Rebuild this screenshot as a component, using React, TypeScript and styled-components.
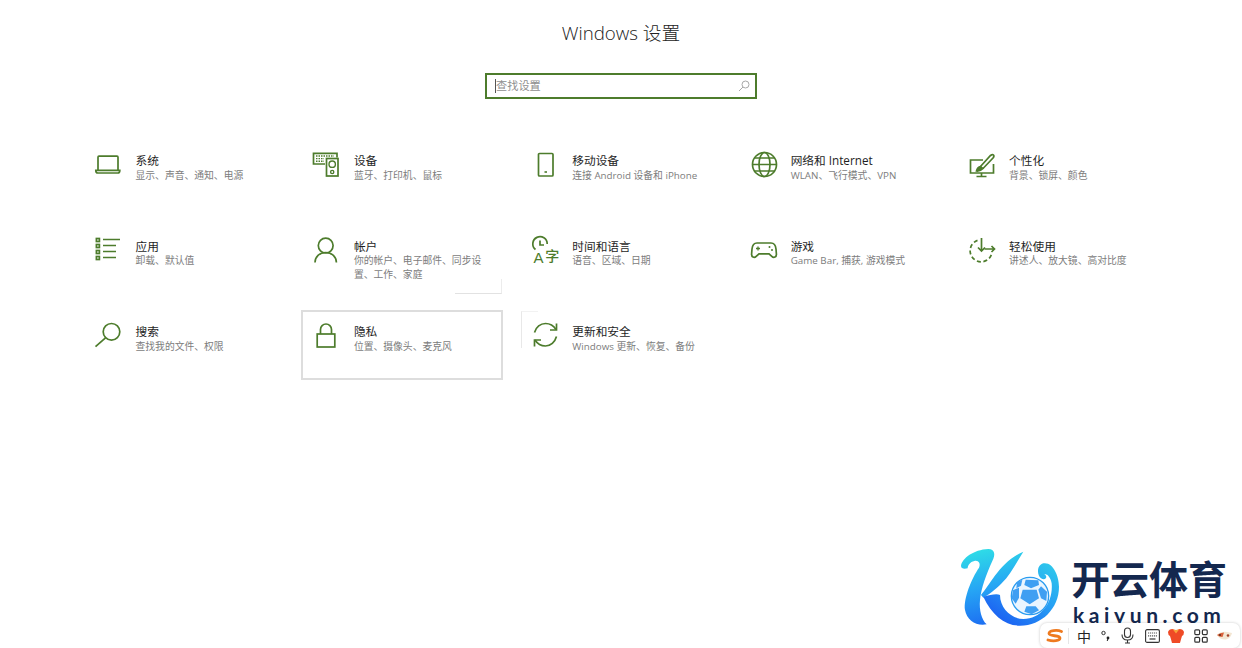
import React from "react";
import styled, { createGlobalStyle } from "styled-components";

const GREEN = "#4d7c2c";
const FONT = `"Open Sans", "Noto Sans CJK SC", "Noto Sans", sans-serif`;

const Global = createGlobalStyle`
  html, body { margin: 0; padding: 0; background: #fff; }
  body { font-family: ${FONT}; overflow: hidden; }
`;

const Page = styled.div`
  position: relative;
  width: 1242px;
  height: 648px;
  overflow: hidden;
  background: #fff;
  padding-top: 19px;
  box-sizing: border-box;
`;

const Title = styled.h1`
  margin: 0;
  height: 28px;
  line-height: 28px;
  text-align: center;
  font-size: 18.7px;
  font-weight: 300;
  color: #222;
`;

const SearchBox = styled.div`
  box-sizing: border-box;
  width: 272px;
  height: 26px;
  margin: 26px 0 0 485px;
  border: 2px solid ${GREEN};
  display: flex;
  align-items: center;
  justify-content: space-between;
  padding: 0 5px 0 8px;
`;

const Caret = styled.span`
  display: inline-block;
  width: 1px;
  height: 14px;
  background: #555;
`;

const Placeholder = styled.span`
  flex: 1;
  display: flex;
  align-items: center;
  font-size: 11.2px;
  line-height: 14px;
  color: #8f8f8f;
`;

const Grid = styled.div`
  display: grid;
  grid-template-columns: repeat(5, 200px);
  grid-auto-rows: 68px;
  column-gap: 18.4px;
  row-gap: 17.5px;
  margin: 41px 0 0 84px;
`;

const Tile = styled.div<{ $selected?: boolean; $hint?: "account" | "update" }>`
  position: relative;
  box-sizing: border-box;
  display: flex;
  gap: 13.5px;
  padding: 11px 10px;
  ${(p) =>
    p.$selected
      ? `
    margin: -1px;
    padding: 10px 9px;
    border: 2px solid #dddddd;
  `
      : ""}
  ${(p) =>
    p.$hint === "account"
      ? `&::after {
          content: "";
          position: absolute;
          right: 0;
          bottom: 0;
          width: 46px;
          height: 14px;
          border-right: 1px solid #ececec;
          border-bottom: 1px solid #e2e2e2;
        }`
      : ""}
  ${(p) =>
    p.$hint === "update"
      ? `&::after {
          content: "";
          position: absolute;
          left: 0;
          top: 0;
          width: 16px;
          height: 36px;
          border-left: 1px solid #e8e8e8;
          border-top: 1px solid #f2f2f2;
        }`
      : ""}
`;

const IconSlot = styled.div`
  flex: 0 0 28px;
  width: 28px;
  height: 28px;
  color: ${GREEN};
  svg { display: block; overflow: visible; }
`;

const TileText = styled.div`
  flex: 1;
  margin-top: 1px;
  min-width: 0;
`;

const TileTitle = styled.div`
  font-size: 11.7px;
  line-height: 16px;
  color: #1e1e1e;
`;

const TileDesc = styled.div`
  font-size: 9.8px;
  line-height: 13.5px;
  color: #7c7c7c;
  margin-top: 0.5px;
`;

const Logo = styled.div`
  position: absolute;
  left: 955px;
  top: 545px;
  width: 280px;
  height: 85px;
  display: flex;
  gap: 6px;
`;

const LogoWords = styled.div`
  display: flex;
  flex-direction: column;
  width: 158px;
`;

const LogoCn = styled.div`
  margin-top: 12.5px;
  font-family: "Noto Sans CJK SC", sans-serif;
  font-size: 39px;
  line-height: 38px;
  font-weight: 700;
  color: #14284f;
  white-space: nowrap;
`;

const LogoEn = styled.div`
  margin-top: 7px;
  padding-left: 2px;
  font-family: "Lato", sans-serif;
  font-size: 21px;
  line-height: 24px;
  font-weight: 700;
  letter-spacing: 4.6px;
  color: #14284f;
  white-space: nowrap;
`;

const ImeBar = styled.div`
  position: absolute;
  left: 1040px;
  top: 623px;
  box-sizing: border-box;
  width: 200px;
  height: 25px;
  padding-left: 3px;
  background: #fff;
  border-radius: 7px;
  box-shadow: 0 0 3px rgba(0, 0, 0, 0.22);
  display: grid;
  grid-template-columns: 24px 5px 24px 20px 22px 28px 20px 30px 16px;
  align-items: center;
  justify-items: center;
`;

const ImeSep = styled.span`
  width: 1px;
  height: 16px;
  background: #e6e6e6;
  margin-right: 2px;
`;

const ImeChar = styled.span`
  font-family: "Noto Sans CJK SC", sans-serif;
  font-size: 14px;
  line-height: 16px;
  color: #222;
`;

const s = { fill: "none", stroke: "currentColor", strokeWidth: 1.7 } as const;
const Svg = ({ children }: { children: React.ReactNode }) => (
  <svg width="28" height="28" viewBox="0 0 28 28">{children}</svg>
);

const Laptop = () => (
  <Svg>
    <path {...s} d="M4 19V6.2q0-1 1-1h18q1 0 1 1V19" />
    <path {...s} d="M1.800 19.400h24q0 2.600-2 2.600H3.800q-2 0-2-2.600z" />
  </Svg>
);
const Devices = () => (
  <Svg>
    <path {...s} d="M13 13H1.500V2.400h23.500V6.500" />
    <path stroke="currentColor" strokeWidth="1.400" strokeDasharray="1.500 1" fill="none" d="M4 5h18M4 7.600h8M4 10.200h8" />
    <rect {...s} x="14.500" y="7.500" width="11.500" height="17.500" />
    <circle {...s} strokeWidth="1.400" cx="20.200" cy="13.200" r="3.200" />
    <circle {...s} strokeWidth="1.400" cx="20.200" cy="21" r="1.600" />
  </Svg>
);
const Phone = () => (
  <Svg>
    <rect {...s} x="7.500" y="2.500" width="14.500" height="22.500" rx="1" />
    <path stroke="currentColor" strokeWidth="1.600" d="M13.500 21h2.500" />
  </Svg>
);
const Globe = () => (
  <Svg>
    <circle {...s} cx="15.500" cy="13.500" r="12" />
    <ellipse {...s} cx="15.500" cy="13.500" rx="5.500" ry="12" />
    <path {...s} d="M3.500 13.500h24M5.500 7h20M5.500 20h20" />
  </Svg>
);
const Brush = () => (
  <Svg>
    <path {...s} d="M15 9H2.500v13h23V13" />
    <path {...s} d="M13.500 22v3.200M8.500 25.500h10" />
    <path {...s} d="M12.500 15.500L22.500 4.500q2-1.500 3-.5t-.5 3L15 17.500" />
    <path {...s} fill="currentColor" d="M12.500 15.500q-3 .2-4 4.500q4 .3 6.500-2.500z" />
  </Svg>
);
const Apps = () => (
  <Svg>
    <rect {...s} x="2.400" y="1.500" width="3" height="3" />
    <rect {...s} x="2.400" y="7.500" width="3" height="3" />
    <rect {...s} x="2.400" y="13.500" width="3" height="3" />
    <rect {...s} x="2.400" y="19.500" width="3" height="3" />
    <path {...s} d="M9 2.500h17M9 8.500h13M9 14.500h13M9 20.500h13" />
  </Svg>
);
const Person = () => (
  <Svg>
    <circle {...s} cx="13.700" cy="8.600" r="7.400" />
    <path {...s} d="M3 25.500c0-5.500 4.500-10 10.700-10s10.700 4.500 10.700 10" />
  </Svg>
);
const TimeLang = () => (
  <Svg>
    <path {...s} d="M4.500 12.500A7.200 7.200 0 1 1 16.200 7" />
    <path {...s} d="M9 3.500V8h4" />
    <text x="2.500" y="25.500" fontSize="15" fontFamily='"Liberation Sans", sans-serif' fill="currentColor">A</text>
    <text x="14.300" y="24" fontSize="14" fontWeight="500" fontFamily='"Noto Sans CJK SC", sans-serif' fill="currentColor">字</text>
  </Svg>
);
const Game = () => (
  <Svg>
    <path {...s} d="M8 6h14c3 0 4.600 2 5 6l.4 5c.2 3-2.600 4.400-4.600 2.400L20 16.800H10l-2.800 2.600c-2 2-4.800.6-4.600-2.400l.4-5C3.400 8 5 6 8 6z" />
    <path stroke="currentColor" strokeWidth="1.300" d="M7 11.500h4M9 9.500v4" />
    <circle cx="20.500" cy="10" r="1" fill="currentColor" />
    <circle cx="23" cy="13" r="1" fill="currentColor" />
  </Svg>
);
const Ease = () => (
  <Svg>
    <path {...s} strokeDasharray="4 2.600" d="M9.500 3.400A11 11 0 1 0 24 15.500" />
    <path {...s} d="M13.500 1v13M10 10.500l3.500 3.500 3.500-3.500" />
    <path {...s} d="M16.500 12h10M23.500 9l3 3-3 3" />
  </Svg>
);
const Search = () => (
  <Svg>
    <circle {...s} cx="17.500" cy="9.800" r="8.300" />
    <path {...s} d="M11.500 15.800L1.500 24.600" />
  </Svg>
);
const Lock = () => (
  <Svg>
    <rect {...s} x="5.200" y="12" width="17.600" height="13" />
    <path {...s} d="M8.500 12V7.500a5.500 5.500 0 0 1 11 0V12" />
  </Svg>
);
const Refresh = () => (
  <Svg>
    <path {...s} d="M3.500 10.500C5 5 9.500 1.500 14.500 1.500c4.500 0 8 2 10.500 6" />
    <path {...s} d="M25.500 1.500v6.500h-6.500" />
    <path {...s} d="M25.500 14.500C24 20 19.500 24 14.500 24c-4.500 0-8-2-10.500-6" />
    <path {...s} d="M3.500 24.500V18h6.500" />
  </Svg>
);

const tiles: {
  title: string;
  desc: string;
  Icon: () => React.ReactElement;
  selected?: boolean;
  hint?: "account" | "update";
}[] = [
  { title: "系统", desc: "显示、声音、通知、电源", Icon: Laptop },
  { title: "设备", desc: "蓝牙、打印机、鼠标", Icon: Devices },
  { title: "移动设备", desc: "连接 Android 设备和 iPhone", Icon: Phone },
  { title: "网络和 Internet", desc: "WLAN、飞行模式、VPN", Icon: Globe },
  { title: "个性化", desc: "背景、锁屏、颜色", Icon: Brush },
  { title: "应用", desc: "卸载、默认值", Icon: Apps },
  { title: "帐户", desc: "你的帐户、电子邮件、同步设置、工作、家庭", Icon: Person, hint: "account" },
  { title: "时间和语言", desc: "语音、区域、日期", Icon: TimeLang },
  { title: "游戏", desc: "Game Bar, 捕获, 游戏模式", Icon: Game },
  { title: "轻松使用", desc: "讲述人、放大镜、高对比度", Icon: Ease },
  { title: "搜索", desc: "查找我的文件、权限", Icon: Search },
  { title: "隐私", desc: "位置、摄像头、麦克风", Icon: Lock, selected: true },
  { title: "更新和安全", desc: "Windows 更新、恢复、备份", Icon: Refresh, hint: "update" },
];

const patches = [
  "203,134 245,134 252,160 224,178 196,160",
  "212,104 250,106 252,120 228,130 208,120",
  "258,124 276,140 274,168 258,160 250,134",
  "174,136 192,128 192,158 182,176 170,160",
  "214,184 242,184 252,196 230,208 208,200",
  "186,112 202,104 198,122 184,130",
];

const LogoMark = () => (
  <svg width="110" height="85" viewBox="0 0 330 255" style={{ flex: "0 0 110px" }}>
    <defs>
      <linearGradient id="kg2" gradientUnits="userSpaceOnUse" x1="60" y1="10" x2="110" y2="245">
        <stop offset="0" stopColor="#2fdfe6" />
        <stop offset="0.5" stopColor="#26a6f4" />
        <stop offset="1" stopColor="#1c6af2" />
      </linearGradient>
      <linearGradient id="kg3" gradientUnits="userSpaceOnUse" x1="300" y1="40" x2="160" y2="245">
        <stop offset="0" stopColor="#2fcfea" />
        <stop offset="0.5" stopColor="#26a0f4" />
        <stop offset="1" stopColor="#1c62f2" />
      </linearGradient>
    </defs>
    <path
      fill="url(#kg2)"
      d="M18 62C22 40 55 14 100 12C120 12 122 30 112 48C95 85 78 130 75 165C72 195 80 225 95 238C65 245 35 225 30 195C25 160 50 100 72 68C78 55 70 45 58 48C45 50 38 62 38 70C28 72 18 72 18 62Z"
    />
    <path fill="url(#kg2)" d="M78 150C105 120 135 50 205 20C180 60 165 90 140 115C120 135 100 150 85 158Z" />
    <path
      fill="url(#kg3)"
      d="M85 155C105 150 125 145 135 150C135 190 170 222 205 222C260 222 295 170 290 115C287 95 275 85 268 88C280 95 272 108 258 100C245 90 245 60 265 55C295 50 312 95 312 125C312 190 260 242 195 242C150 242 110 210 85 155Z"
    />
    <circle cx="225" cy="153" r="56" fill="#eaf5ff" stroke="#2a9cf0" strokeWidth="4" />
    {patches.map((p) => (
      <polygon key={p} points={p} fill="#3f9ff2" />
    ))}
  </svg>
);

const SogouS = () => (
  <svg width="18" height="14" viewBox="0 0 18 14">
    <path
      d="M15.500 2.500C11 .5 3 1.500 3 4.500s11 1.500 11 4.500-7 3.500-12 2"
      fill="none"
      stroke="#ee7a1f"
      strokeWidth="2.800"
      strokeLinecap="round"
    />
  </svg>
);
const ImeDots = () => (
  <svg width="10" height="14" viewBox="0 0 10 14">
    <circle cx="2.500" cy="4" r="1.700" fill="none" stroke="#333" strokeWidth="1" />
    <circle cx="7" cy="9" r="1.400" fill="#222" />
    <path d="M7 9.500l-.8 2.500" stroke="#222" strokeWidth="1" />
  </svg>
);
const ImeMic = () => (
  <svg width="13" height="17" viewBox="0 0 13 17">
    <rect x="3.500" y="1" width="6" height="9.500" rx="3" fill="none" stroke="#333" strokeWidth="1.100" />
    <path d="M1 7.500c0 4 2.500 5.500 5.500 5.500S12 11.500 12 7.500M6.500 13v3M4 16h5" fill="none" stroke="#333" strokeWidth="1.100" />
  </svg>
);
const ImeKeys = () => (
  <svg width="15" height="14" viewBox="0 0 15 14">
    <rect x=".6" y=".6" width="13.800" height="12.800" rx="1.500" fill="none" stroke="#333" strokeWidth="1.100" />
    <path d="M3 4h9M3 6.800h9" stroke="#555" strokeWidth="1.200" strokeDasharray="1.200 .8" />
    <path d="M4.500 10h6" stroke="#333" strokeWidth="1.200" />
  </svg>
);
const ImeShirt = () => (
  <svg width="16" height="14" viewBox="0 0 16 14">
    <path d="M0 3Q1 0 4.500 0 8 2 11.500 0 15 0 16 3 16 6 14 7 13 10 12 14H4Q3 10 2 7 0 6 0 3z" fill="#ef4a26" />
    <path d="M4.500 0q3.500 2 7 0L8 4.500z" fill="#f7a23a" />
  </svg>
);
const ImeApps = () => (
  <svg width="14" height="14" viewBox="0 0 14 14" fill="none" stroke="#333" strokeWidth="1.200">
    <rect x=".8" y=".8" width="4.800" height="4.800" rx="1" />
    <rect x="8.400" y=".8" width="4.800" height="4.800" rx="1" />
    <rect x=".8" y="8.400" width="4.800" height="4.800" rx="1" />
    <rect x="8.400" y="8.400" width="4.800" height="4.800" rx="1" />
  </svg>
);
const ImeTiger = () => (
  <svg width="17" height="12" viewBox="0 0 17 12">
    <path d="M1 5q4-4 10-3l5 1q-1 5-6 6.500Q4 10 1 5z" fill="#f3e6d2" />
    <path d="M1 5q3-2.500 7-2.500L6.500 7Q3 7 1 5z" fill="#d9603a" />
    <circle cx="12" cy="5.500" r="1.300" fill="#a5422a" />
    <circle cx="4" cy="5" r="1" fill="#5a2a1a" />
  </svg>
);

export default function App() {
  return (
    <Page>
      <Global />
      <Title>Windows 设置</Title>
      <SearchBox>
        <Placeholder>
          <Caret />
          查找设置
        </Placeholder>
        <svg width="12" height="12" viewBox="0 0 12 12" fill="none" stroke="#a8a8a8" strokeWidth="1">
          <circle cx="7.500" cy="4.500" r="3.500" />
          <path d="M5 7L1 11" />
        </svg>
      </SearchBox>
      <Grid>
        {tiles.map(({ title, desc, Icon, selected, hint }) => (
          <Tile key={title} $selected={selected} $hint={hint}>
            <IconSlot>
              <Icon />
            </IconSlot>
            <TileText>
              <TileTitle>{title}</TileTitle>
              <TileDesc>{desc}</TileDesc>
            </TileText>
          </Tile>
        ))}
      </Grid>
      <Logo>
        <LogoMark />
        <LogoWords>
          <LogoCn>开云体育</LogoCn>
          <LogoEn>kaiyun.com</LogoEn>
        </LogoWords>
      </Logo>
      <ImeBar>
        <SogouS />
        <ImeSep />
        <ImeChar>中</ImeChar>
        <ImeDots />
        <ImeMic />
        <ImeKeys />
        <ImeShirt />
        <ImeApps />
        <ImeTiger />
      </ImeBar>
    </Page>
  );
}
